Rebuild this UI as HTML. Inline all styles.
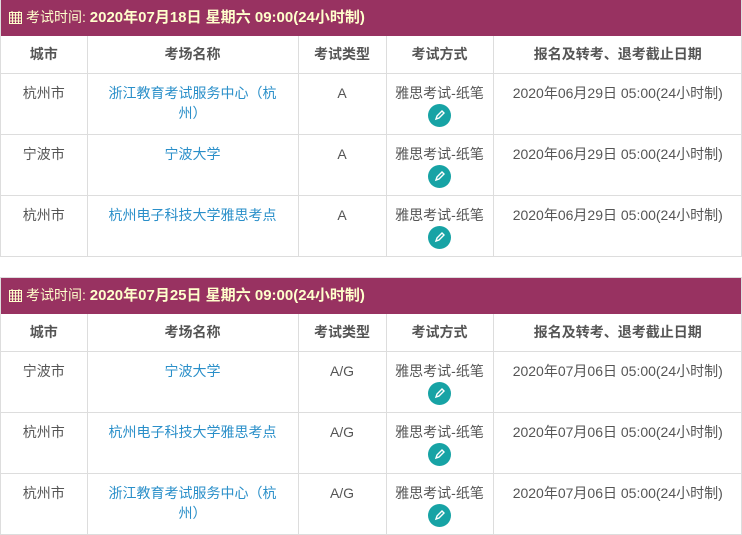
<!DOCTYPE html>
<html><head><meta charset="utf-8"><style>
*{margin:0;padding:0;box-sizing:border-box}
body{width:742px;height:534px;overflow:hidden;background:#fff;font-family:"Liberation Sans","Noto Sans CJK SC",sans-serif;font-size:14px;color:#555}
.blk{position:absolute;left:0;width:742px;border:1px solid #ddd;border-top:none}
.bar{height:36px;background:#983261;color:#ffffcc;font-size:14px;line-height:34px;padding-left:8px;white-space:nowrap}
.bar b{font-weight:bold;font-size:15px}
.cal{display:inline-block;vertical-align:-2px;margin-right:4px}
table{border-collapse:collapse;width:741px;table-layout:fixed}
td,th{border:1px solid #ddd;text-align:center;vertical-align:top;line-height:20px}
tr:first-child td,tr:first-child th{border-top:none}
td:first-child,th:first-child{border-left:none}
td:last-child,th:last-child{border-right:none}
th{height:37px;padding-top:8px;font-weight:bold;color:#555}
td{height:61px;padding-top:9px}
tr:last-child td{border-bottom:none}
a{color:#2a8fc9;text-decoration:none}
.pen{display:block;margin:1px auto 0;width:23px;height:23px;border-radius:50%;background:#17a3a5;position:relative}
.pen svg{position:absolute;left:6px;top:6px}
</style></head><body>
<div class="blk" style="top:0">
<div class="bar"><svg class="cal" width="13" height="13" viewBox="0 0 13 13"><rect x="0.5" y="1.5" width="12" height="11" fill="none" stroke="#ffffcc"/><path d="M0 4h13M0 7h13M0 10h13M3.5 1v12M6.5 1v12M9.5 1v12M3 0v2M10 0v2" stroke="#ffffcc"/></svg>考试时间: <b>2020年07月18日 星期六 09:00(24小时制)</b></div>
<table><colgroup><col style="width:86px"><col style="width:211px"><col style="width:88px"><col style="width:107px"><col></colgroup>
<tr><th>城市</th><th>考场名称</th><th>考试类型</th><th>考试方式</th><th>报名及转考、退考截止日期</th></tr>
<tr><td>杭州市</td><td style="padding-left:18px;padding-right:18px"><a>浙江教育考试服务中心（杭州）</a></td><td>A</td><td>雅思考试-纸笔<span class="pen"><svg width="11" height="11" viewBox="0 0 11 11"><path d="M2 9l1-3 5-5 2 2-5 5z M2 9l3-1" fill="none" stroke="#fff" stroke-width="1.4"/></svg></span></td><td>2020年06月29日 05:00(24小时制)</td></tr>
<tr><td>宁波市</td><td><a>宁波大学</a></td><td>A</td><td>雅思考试-纸笔<span class="pen"><svg width="11" height="11" viewBox="0 0 11 11"><path d="M2 9l1-3 5-5 2 2-5 5z M2 9l3-1" fill="none" stroke="#fff" stroke-width="1.4"/></svg></span></td><td>2020年06月29日 05:00(24小时制)</td></tr>
<tr><td>杭州市</td><td><a>杭州电子科技大学雅思考点</a></td><td>A</td><td>雅思考试-纸笔<span class="pen"><svg width="11" height="11" viewBox="0 0 11 11"><path d="M2 9l1-3 5-5 2 2-5 5z M2 9l3-1" fill="none" stroke="#fff" stroke-width="1.4"/></svg></span></td><td>2020年06月29日 05:00(24小时制)</td></tr>
</table></div>
<div class="blk" style="top:277px;border-top:1px solid #ddd">
<div class="bar"><svg class="cal" width="13" height="13" viewBox="0 0 13 13"><rect x="0.5" y="1.5" width="12" height="11" fill="none" stroke="#ffffcc"/><path d="M0 4h13M0 7h13M0 10h13M3.5 1v12M6.5 1v12M9.5 1v12M3 0v2M10 0v2" stroke="#ffffcc"/></svg>考试时间: <b>2020年07月25日 星期六 09:00(24小时制)</b></div>
<table><colgroup><col style="width:86px"><col style="width:211px"><col style="width:88px"><col style="width:107px"><col></colgroup>
<tr><th>城市</th><th>考场名称</th><th>考试类型</th><th>考试方式</th><th>报名及转考、退考截止日期</th></tr>
<tr><td>宁波市</td><td><a>宁波大学</a></td><td>A/G</td><td>雅思考试-纸笔<span class="pen"><svg width="11" height="11" viewBox="0 0 11 11"><path d="M2 9l1-3 5-5 2 2-5 5z M2 9l3-1" fill="none" stroke="#fff" stroke-width="1.4"/></svg></span></td><td>2020年07月06日 05:00(24小时制)</td></tr>
<tr><td>杭州市</td><td><a>杭州电子科技大学雅思考点</a></td><td>A/G</td><td>雅思考试-纸笔<span class="pen"><svg width="11" height="11" viewBox="0 0 11 11"><path d="M2 9l1-3 5-5 2 2-5 5z M2 9l3-1" fill="none" stroke="#fff" stroke-width="1.4"/></svg></span></td><td>2020年07月06日 05:00(24小时制)</td></tr>
<tr><td>杭州市</td><td style="padding-left:18px;padding-right:18px"><a>浙江教育考试服务中心（杭州）</a></td><td>A/G</td><td>雅思考试-纸笔<span class="pen"><svg width="11" height="11" viewBox="0 0 11 11"><path d="M2 9l1-3 5-5 2 2-5 5z M2 9l3-1" fill="none" stroke="#fff" stroke-width="1.4"/></svg></span></td><td>2020年07月06日 05:00(24小时制)</td></tr>
</table></div>
</body></html>
